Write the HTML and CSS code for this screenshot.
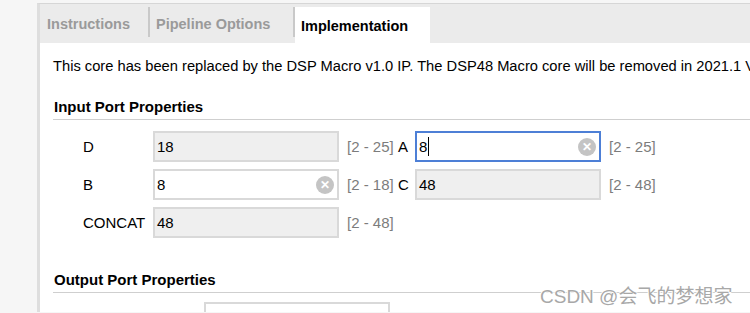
FILE: index.html
```html
<!DOCTYPE html>
<html lang="en">
<head>
  <meta charset="UTF-8">
  <title>DSP48 Macro — Implementation</title>
  <link rel="stylesheet" href="styles.css">
</head>
<body>
  <div class="panel">
    <div class="tabs">
      <div class="tab tab-first">Instructions</div>
      <div class="tab tab-second">Pipeline Options</div>
      <div class="tab active">Implementation</div>
    </div>

    <div class="content">
      <div class="notice">This core has been replaced by the DSP Macro v1.0 IP. The DSP48 Macro core will be removed in 2021.1 Vivado release.</div>

      <div class="section-title">Input Port Properties</div>
      <div class="ports">
        <div class="label">D</div>
        <div class="field readonly">18</div>
        <div class="range">[2 - 25]</div>
        <div class="label">A</div>
        <div class="field focus">8<span class="caret"></span><span class="clear">&#x2715;</span></div>
        <div class="range">[2 - 25]</div>

        <div class="label">B</div>
        <div class="field">8<span class="clear">&#x2715;</span></div>
        <div class="range">[2 - 18]</div>
        <div class="label">C</div>
        <div class="field readonly">48</div>
        <div class="range">[2 - 48]</div>

        <div class="label">CONCAT</div>
        <div class="field readonly">48</div>
        <div class="range">[2 - 48]</div>
      </div>

      <div class="section-title out">Output Port Properties</div>
      <div class="out-row">
        <div class="field out-field"></div>
      </div>
    </div>
  </div>

  <div class="watermark">CSDN @会飞的梦想家</div>
</body>
</html>
```

FILE: styles.css
```css
body { margin: 0; background: #f6f6f6; font-family: "Liberation Sans", Arial, sans-serif; font-size: 14px; color: #000; height: 313px; overflow: hidden; position: relative; }
.panel { margin: 3px 0 0 37px; border-top: 1px solid #d6d6d6; border-left: 3px solid #dedede; background: #fff; height: 309px; box-sizing: border-box; overflow: hidden; }
.tabs { display: flex; align-items: flex-end; background: #ebebeb; height: 39px; }
.tab { height: 36px; display: flex; align-items: center; font-weight: bold; font-size: 14.5px; color: #9a9a9a; box-sizing: border-box; padding-top: 1px; }
.tab-first { width: 110px; padding-left: 7px; border-right: 2px solid #c9c9c9; height: 30px; margin-bottom: 6px; padding-top: 4px; }
.tab-second { width: 145px; padding-left: 6px; border-right: 2px solid #c9c9c9; height: 30px; margin-bottom: 6px; padding-top: 4px; }
.active { width: 135px; padding-left: 6px; background: #fff; color: #000; }
.content { padding: 0 0 0 13px; overflow: hidden; }
.notice { white-space: nowrap; font-size: 14.7px; padding-top: 15px; height: 32px; }
.section-title { font-weight: bold; font-size: 15px; margin-top: 8px; padding: 0 0 4px 1px; border-bottom: 1px solid #cfcfcf; }
.section-title.out { margin-top: 33px; }
.ports { display: grid; grid-template-columns: 70px 186px 59px 17px 186px auto; row-gap: 7px; margin: 11px 0 0 30px; align-items: center; }
.label { font-size: 15px; }
.field { height: 31px; box-sizing: border-box; border: 2px solid #d9d9d9; background: #fff; font-size: 15px; display: flex; align-items: center; padding-left: 2px; position: relative; }
.readonly { background: #efefef; }
.focus { border-color: #4d7fd6; }
.caret { display: inline-block; width: 1px; height: 19px; background: #000; margin-left: 1px; }
.clear { position: absolute; right: 3px; top: 5px; width: 18px; height: 18px; border-radius: 50%; background: #c4c4c4; color: #fff; font-size: 12px; font-weight: bold; display: flex; align-items: center; justify-content: center; }
.range { font-size: 15px; color: #7c7c7c; padding-left: 8px; }
.out-row { padding: 9px 0 0 151px; }
.out-field { width: 186px; }
.watermark { position: absolute; left: 540px; top: 281px; font-size: 19px; color: #a8a8a8; font-family: "Liberation Sans", "Noto Sans CJK SC", sans-serif; text-shadow: -1px 0 #fff, 1px 0 #fff, 0 -1px #fff, 0 1px #fff; }
```
